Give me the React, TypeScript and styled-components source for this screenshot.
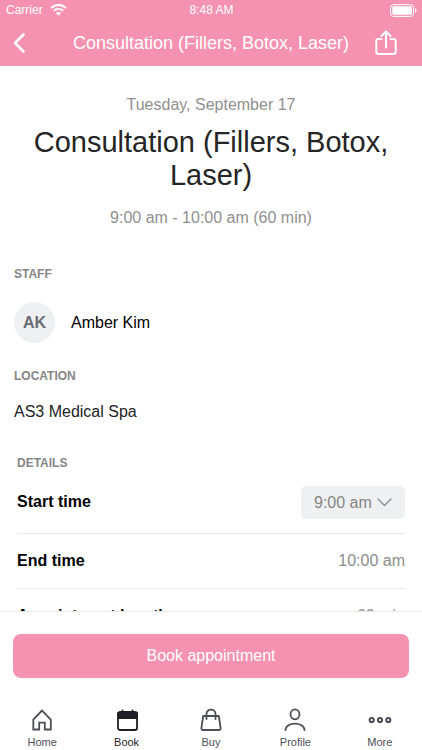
import React, { useState } from "react";
import styled, { createGlobalStyle } from "styled-components";

const pink = "#f592b2";
const font = '"Liberation Sans", Arial, Helvetica, sans-serif';

const GlobalStyle = createGlobalStyle`
  *, *::before, *::after { box-sizing: border-box; }
  html, body { margin: 0; background: #fff; }
  body, button, select { font-family: ${font}; }
  h1, h2, p { margin: 0; font-weight: 400; }
  svg { display: block; flex: none; }
`;

const Screen = styled.div`
  height: 100vh;
  display: flex;
  flex-direction: column;
  overflow: hidden;
  color: #000;
`;

const Header = styled.header`
  flex: none;
  background: ${pink};
  color: #fff;
`;

const StatusBar = styled.div`
  height: 20px;
  display: grid;
  grid-template-columns: 1fr auto 1fr;
  align-items: center;
  padding: 0 5px 0 6px;
  font-size: 12px;
  line-height: 20px;
`;

const Carrier = styled.div`
  display: flex;
  align-items: center;
  gap: 7px;
`;

const Battery = styled.div`
  justify-self: end;
`;

const TitleBar = styled.div`
  height: 46px;
  display: grid;
  grid-template-columns: 48px 1fr 48px;
  align-items: center;
  padding: 0 13px;
`;

const IconButton = styled.button<{ $end?: boolean }>`
  height: 40px;
  padding: 0;
  border: 0;
  background: none;
  color: inherit;
  display: flex;
  align-items: center;
  justify-content: ${(p) => (p.$end ? "flex-end" : "flex-start")};
  padding-right: ${(p) => (p.$end ? "12px" : "0")};
`;

const BarTitle = styled.p`
  font-size: 18px;
  line-height: 24px;
  white-space: nowrap;
  display: flex;
  justify-content: center;
`;

const Content = styled.main`
  flex: 1;
  min-height: 0;
  overflow: hidden;
  padding: 29px 14px 0;
`;

const Summary = styled.section`
  text-align: center;
`;

const Muted = styled.p`
  font-size: 16px;
  line-height: 20px;
  color: #8f8f8f;
`;

const Heading = styled.h1`
  padding: 11px 0 16px;
  font-size: 29px;
  line-height: 33px;
  color: #252525;
`;

const Section = styled.section<{ $top: number; $inset?: boolean }>`
  padding-top: ${(p) => p.$top}px;
  margin: 0 ${(p) => (p.$inset ? "3px" : "0")};
`;

const Label = styled.h2`
  font-size: 12px;
  line-height: 16px;
  font-weight: 700;
  color: #868686;
  text-transform: uppercase;
`;

const Person = styled.div`
  display: flex;
  align-items: center;
  gap: 16px;
  margin-top: 20px;
  font-size: 16px;
`;

const Avatar = styled.span`
  width: 41px;
  height: 41px;
  border-radius: 50%;
  background: #eff0f2;
  color: #6a6b75;
  font-weight: 700;
  display: flex;
  align-items: center;
  justify-content: center;
`;

const Place = styled.p`
  margin-top: 18px;
  font-size: 16px;
  line-height: 20px;
  color: #222;
`;

const Row = styled.div<{ $first?: boolean }>`
  height: ${(p) => (p.$first ? "63px" : "55px")};
  display: flex;
  align-items: center;
  justify-content: space-between;
  border-bottom: 1px solid #e9e9e9;
  font-size: 16px;
`;

const Term = styled.label`
  font-weight: 700;
`;

const Value = styled.span`
  color: #8c8c8c;
`;

const SelectBox = styled.div`
  display: grid;
  align-items: center;
  color: #8c8c8c;

  > * { grid-area: 1 / 1; }
  > svg {
    justify-self: end;
    margin-right: 13px;
    pointer-events: none;
  }
`;

const TimeSelect = styled.select`
  appearance: none;
  height: 33px;
  padding: 0 33px 0 13px;
  border: 0;
  border-radius: 5px;
  background: #eff0f2;
  color: #858585;
  font-size: 16px;
`;

const Footer = styled.footer`
  flex: none;
  border-top: 1px solid #e9e9e9;
  background: #fff;
  padding-top: 22px;
`;

const BookButton = styled.button`
  display: block;
  width: calc(100% - 26px);
  height: 44px;
  margin: 0 13px;
  border: 0;
  border-radius: 8px;
  background: ${pink};
  color: #fff;
  font-size: 16px;
`;

const TabBar = styled.nav`
  display: grid;
  grid-template-columns: repeat(5, 1fr);
  padding-top: 30px;
`;

const Tab = styled.a<{ $active?: boolean }>`
  display: flex;
  flex-direction: column;
  align-items: center;
  gap: 2px;
  font-size: 11px;
  line-height: 16px;
  color: ${(p) => (p.$active ? "#1f1f25" : "#4d4e57")};
  text-decoration: none;
`;

const stroke = {
  fill: "none",
  stroke: "currentColor",
  strokeWidth: 1.8,
  strokeLinejoin: "round",
  strokeLinecap: "round",
} as const;

const WifiIcon = () => (
  <svg width="17" height="12" viewBox="0 0 17 12" fill="none" stroke="#fff" strokeWidth="1.9">
    <path d="M1 4.1C5.2-.1 11.8-.1 16 4.1" />
    <path d="M3.7 6.8C6.4 4.2 10.6 4.2 13.3 6.8" />
    <path d="M8.5 11.7 5.9 9.1C7.3 7.7 9.7 7.7 11.1 9.1Z" fill="#fff" stroke="none" />
  </svg>
);

const BatteryIcon = () => (
  <svg width="27" height="13" viewBox="0 0 27 13">
    <rect x=".6" y=".6" width="23" height="11.8" rx="3" fill="none" stroke="#fff" />
    <rect x="2.3" y="2.3" width="19.6" height="8.4" rx="1.4" fill="#fff" />
    <path d="M25 4.3c1.9.6 1.9 3.8 0 4.4z" fill="#fff" />
  </svg>
);

const BackIcon = () => (
  <svg width="14" height="20" viewBox="0 0 14 20" {...stroke} strokeWidth="2.5">
    <path d="M10.5 1.5 2 10l8.500 8.500" />
  </svg>
);

const ShareIcon = () => (
  <svg width="22" height="26" viewBox="0 0 22 26" {...stroke} strokeWidth="2">
    <path d="M6.500 9H3.600C2.100 9 1.300 9.800 1.300 11v11c0 1.300.8 2 2.300 2h14.800c1.500 0 2.300-.7 2.300-2V11c0-1.200-.8-2-2.300-2h-2.900M11 17.500V2M6.500 6 11 1.500 15.500 6" />
  </svg>
);

const ChevronIcon = () => (
  <svg width="15" height="9" viewBox="0 0 15 9" {...stroke} strokeWidth="1.3">
    <path d="M1 1l6.500 6.500L14 1" />
  </svg>
);

const HomeIcon = () => (
  <svg width="24" height="24" viewBox="0 0 24 24" {...stroke}>
    <path
      d="M12 2.500 3.300 11.500V21.500H9.200V14.600H14.800V21.500H20.800V11.500Z"
      strokeLinejoin="miter"
    />
  </svg>
);

const CalendarIcon = () => (
  <svg width="24" height="24" viewBox="0 0 24 24" {...stroke}>
    <rect x="3" y="4" width="19" height="18" rx="2" />
    <path d="M3 5h19v5H3zM7.500 2.500V5M17.500 2.500V5" fill="currentColor" />
  </svg>
);

const BagIcon = () => (
  <svg width="24" height="24" viewBox="0 0 24 24" {...stroke}>
    <path d="M4.200 8h15.600l1.800 12c.1 1.200-.5 2-1.700 2H4.100c-1.200 0-1.900-.8-1.700-2Z" />
    <path d="M7.500 11V6C7.500 .2 16.500 .2 16.500 6V11" />
  </svg>
);

const ProfileIcon = () => (
  <svg width="24" height="24" viewBox="0 0 24 24" {...stroke}>
    <ellipse cx="12" cy="6.300" rx="4.500" ry="5" />
    <path d="M2.500 22c.3-8.500 18.700-8.500 19 0" />
  </svg>
);

const MoreIcon = () => (
  <svg width="24" height="24" viewBox="0 0 24 24" {...stroke} strokeWidth="2">
    <circle cx="3.700" cy="12" r="2.100" />
    <circle cx="12" cy="12" r="2.100" />
    <circle cx="20.300" cy="12" r="2.100" />
  </svg>
);

const tabs = [
  { name: "Home", Icon: HomeIcon },
  { name: "Book", Icon: CalendarIcon },
  { name: "Buy", Icon: BagIcon },
  { name: "Profile", Icon: ProfileIcon },
  { name: "More", Icon: MoreIcon },
];

export default function App() {
  const [start, setStart] = useState("9:00 am");

  return (
    <Screen>
      <GlobalStyle />
      <Header>
        <StatusBar>
          <Carrier>
            Carrier
            <WifiIcon />
          </Carrier>
          <span>8:48 AM</span>
          <Battery>
            <BatteryIcon />
          </Battery>
        </StatusBar>
        <TitleBar>
          <IconButton aria-label="Back">
            <BackIcon />
          </IconButton>
          <BarTitle>Consultation (Fillers, Botox, Laser)</BarTitle>
          <IconButton aria-label="Share" $end>
            <ShareIcon />
          </IconButton>
        </TitleBar>
      </Header>

      <Content>
        <Summary>
          <Muted>Tuesday, September 17</Muted>
          <Heading>Consultation (Fillers, Botox, Laser)</Heading>
          <Muted>9:00 am - 10:00 am (60 min)</Muted>
        </Summary>

        <Section $top={38}>
          <Label>Staff</Label>
          <Person>
            <Avatar>AK</Avatar>
            Amber Kim
          </Person>
        </Section>

        <Section $top={25}>
          <Label>Location</Label>
          <Place>AS3 Medical Spa</Place>
        </Section>

        <Section $top={33} $inset>
          <Label>Details</Label>
          <Row $first>
            <Term htmlFor="start">Start time</Term>
            <SelectBox>
              <TimeSelect id="start" value={start} onChange={(e) => setStart(e.target.value)}>
                <option>9:00 am</option>
                <option>9:30 am</option>
              </TimeSelect>
              <ChevronIcon />
            </SelectBox>
          </Row>
          <Row>
            <Term as="span">End time</Term>
            <Value>10:00 am</Value>
          </Row>
          <Row>
            <Term as="span">Appointment length</Term>
            <Value>60 min</Value>
          </Row>
        </Section>
      </Content>

      <Footer>
        <BookButton>Book appointment</BookButton>
        <TabBar>
          {tabs.map(({ name, Icon }) => (
            <Tab key={name} href={`#${name.toLowerCase()}`} $active={name === "Book"}>
              <Icon />
              {name}
            </Tab>
          ))}
        </TabBar>
      </Footer>
    </Screen>
  );
}
